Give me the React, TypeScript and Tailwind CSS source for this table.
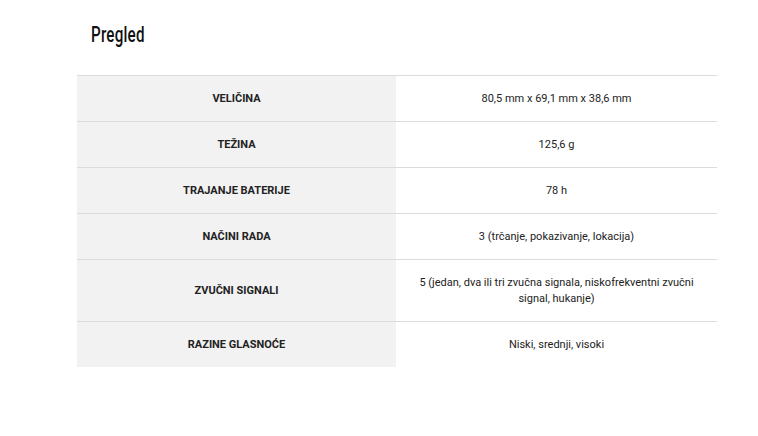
import React from 'react';

const rows: { label: string; value: string }[] = [
  { label: 'VELIČINA', value: '80,5 mm x 69,1 mm x 38,6 mm' },
  { label: 'TEŽINA', value: '125,6 g' },
  { label: 'TRAJANJE BATERIJE', value: '78 h' },
  { label: 'NAČINI RADA', value: '3 (trčanje, pokazivanje, lokacija)' },
  { label: 'ZVUČNI SIGNALI', value: '5 (jedan, dva ili tri zvučna signala, niskofrekventni zvučni signal, hukanje)' },
  { label: 'RAZINE GLASNOĆE', value: 'Niski, srednji, visoki' },
];

export default function App() {
  return (
    <div className="w-[758px] h-[436px] bg-white font-['Roboto',sans-serif] text-[#222]">
      <div className="pt-[22px] pl-[91px]">
        <h2 className="inline-block origin-left scale-x-[0.69] text-[22px] leading-[26px] font-medium text-[#111] font-['Roboto',sans-serif] tracking-[0.3px]">
          Pregled
        </h2>
      </div>
      <div className="mt-[26px] ml-[77px] w-[640px] border-t border-[#dcdcdc]">
        {rows.map((row, i) => (
          <div
            key={row.label}
            className={`grid grid-cols-[319px_321px] ${i < rows.length - 1 ? 'border-b border-[#dcdcdc]' : ''}`}
          >
            <div className="bg-[#f2f2f2] flex items-center justify-center px-4 text-[11px] font-bold leading-[16px] text-center">
              {row.label}
            </div>
            <div className="flex items-center justify-center px-4 py-[14.5px] text-[11px] leading-[16px] text-center">
              {row.value}
            </div>
          </div>
        ))}
      </div>
    </div>
  );
}
